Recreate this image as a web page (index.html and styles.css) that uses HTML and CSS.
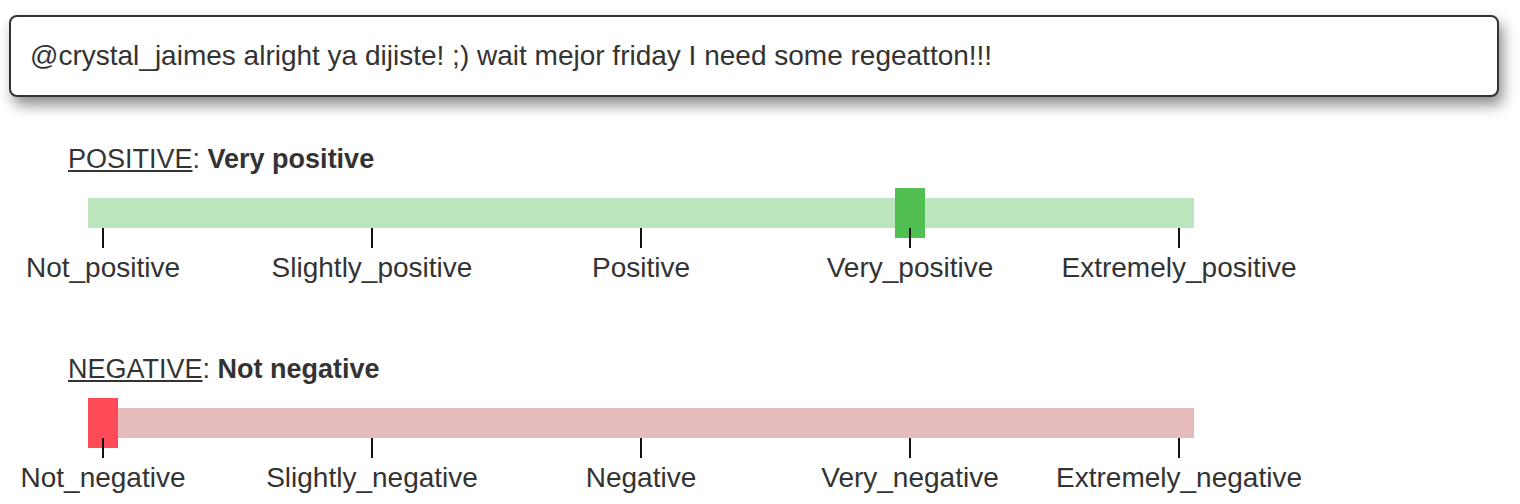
FILE: index.html
```html
<!DOCTYPE html>
<html lang="en">
<head>
  <meta charset="UTF-8">
  <title>Sentiment</title>
  <link rel="stylesheet" href="styles.css">
</head>
<body>
  <div class="tweet">@crystal_jaimes alright ya dijiste! ;) wait mejor friday I need some regeatton!!!</div>

  <div class="scale positive">
    <div class="scale-title"><span class="dim-name">POSITIVE</span>: <b>Very positive</b></div>
    <div class="track">
      <div class="marker" style="left: calc((100% - 30px) * 0.75)"></div>
    </div>
    <div class="ticks">
      <div class="tick"><span class="tick-line"></span><span class="tick-label">Not_positive</span></div>
      <div class="tick"><span class="tick-line"></span><span class="tick-label">Slightly_positive</span></div>
      <div class="tick"><span class="tick-line"></span><span class="tick-label">Positive</span></div>
      <div class="tick"><span class="tick-line"></span><span class="tick-label">Very_positive</span></div>
      <div class="tick"><span class="tick-line"></span><span class="tick-label">Extremely_positive</span></div>
    </div>
  </div>

  <div class="scale negative">
    <div class="scale-title"><span class="dim-name">NEGATIVE</span>: <b>Not negative</b></div>
    <div class="track">
      <div class="marker" style="left: calc((100% - 30px) * 0)"></div>
    </div>
    <div class="ticks">
      <div class="tick"><span class="tick-line"></span><span class="tick-label">Not_negative</span></div>
      <div class="tick"><span class="tick-line"></span><span class="tick-label">Slightly_negative</span></div>
      <div class="tick"><span class="tick-line"></span><span class="tick-label">Negative</span></div>
      <div class="tick"><span class="tick-line"></span><span class="tick-label">Very_negative</span></div>
      <div class="tick"><span class="tick-line"></span><span class="tick-label">Extremely_negative</span></div>
    </div>
  </div>
</body>
</html>
```

FILE: styles.css
```css
body {
  margin: 0;
  font-family: "Liberation Sans", Arial, sans-serif;
  color: #333;
  background: #fff;
}
.tweet {
  margin: 15px 21px 0 9px;
  padding: 23px 19px;
  font-size: 28px;
  line-height: 32px;
  border: 2px solid #333;
  border-radius: 8px;
  background: #fff;
  box-shadow: 4px 8px 14px rgba(0,0,0,0.45);
}
.scale {
  margin-top: 47px;
}
.scale + .scale {
  margin-top: 70px;
}
.scale-title {
  margin-left: 68px;
  font-size: 27px;
  line-height: 31px;
}
.dim-name {
  text-decoration: underline;
  text-underline-offset: 2px;
}
.track {
  position: relative;
  width: 1106px;
  height: 30px;
  margin: 23px 0 0 88px;
}
.marker {
  position: absolute;
  top: -10px;
  width: 30px;
  height: 50px;
}
.positive .track {
  background: #bbe5bd;
}
.positive .marker {
  background: #51bf51;
}
.negative .track {
  background: #e5bbbc;
}
.negative .marker {
  background: #ff4b57;
}
.ticks {
  position: relative;
  display: flex;
  justify-content: space-between;
  width: 1078px;
  margin-left: 102px;
}
.tick {
  width: 2px;
  display: flex;
  flex-direction: column;
  align-items: center;
}
.tick-line {
  width: 2px;
  height: 20px;
  background: #111;
}
.tick-label {
  margin-top: 4px;
  font-size: 28px;
  line-height: 32px;
  white-space: nowrap;
}
```
